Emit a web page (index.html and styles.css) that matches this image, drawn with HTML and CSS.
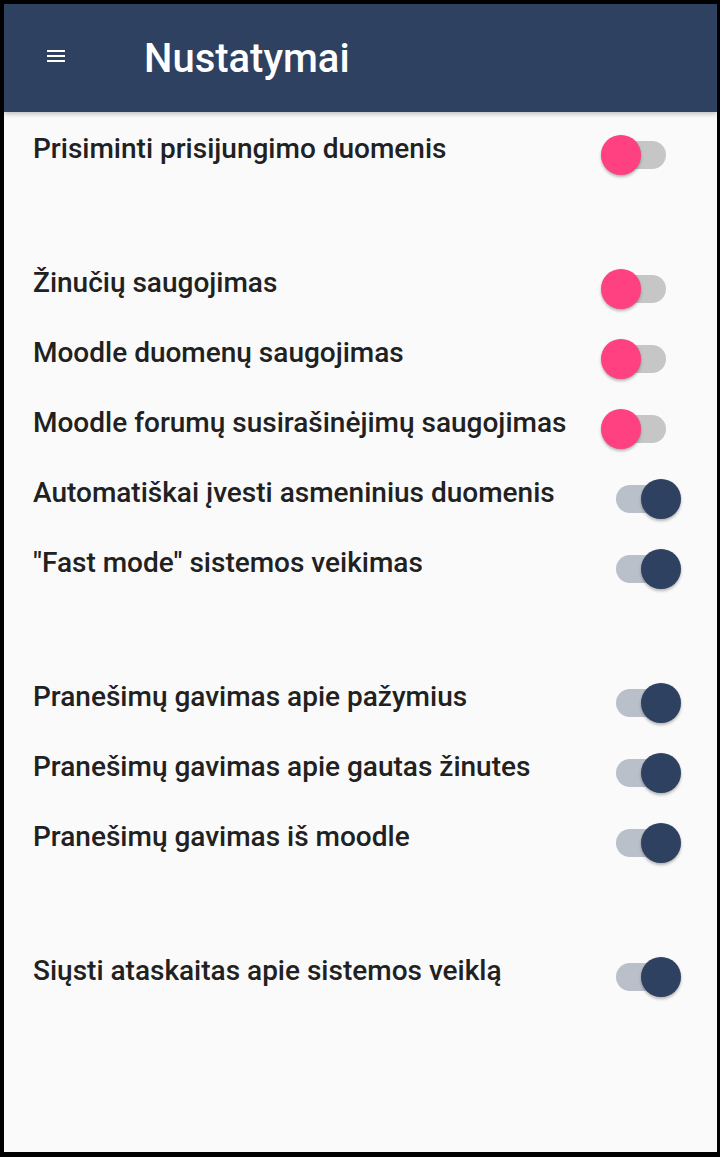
FILE: index.html
```html
<!DOCTYPE html>
<html lang="lt">
<head>
<meta charset="utf-8">
<title>Nustatymai</title>
<link rel="stylesheet" href="styles.css">
</head>
<body>
<div class="frame">
  <header class="appbar">
    <svg class="menu-icon" width="18" height="12" viewBox="0 0 18 12" aria-hidden="true">
      <rect x="0" y="0" width="18" height="2" fill="#fff"/>
      <rect x="0" y="5" width="18" height="2" fill="#fff"/>
      <rect x="0" y="10" width="18" height="2" fill="#fff"/>
    </svg>
    <h1 class="title">Nustatymai</h1>
  </header>
  <main class="settings">
    <section class="group">
      <div class="row"><span class="label">Prisiminti prisijungimo duomenis</span><span class="switch off"><span class="track"></span><span class="thumb"></span></span></div>
    </section>
    <section class="group">
      <div class="row"><span class="label">Žinučių saugojimas</span><span class="switch off"><span class="track"></span><span class="thumb"></span></span></div>
      <div class="row"><span class="label">Moodle duomenų saugojimas</span><span class="switch off"><span class="track"></span><span class="thumb"></span></span></div>
      <div class="row"><span class="label">Moodle forumų susirašinėjimų saugojimas</span><span class="switch off"><span class="track"></span><span class="thumb"></span></span></div>
      <div class="row"><span class="label">Automatiškai įvesti asmeninius duomenis</span><span class="switch on"><span class="track"></span><span class="thumb"></span></span></div>
      <div class="row"><span class="label">"Fast mode" sistemos veikimas</span><span class="switch on"><span class="track"></span><span class="thumb"></span></span></div>
    </section>
    <section class="group">
      <div class="row"><span class="label">Pranešimų gavimas apie pažymius</span><span class="switch on"><span class="track"></span><span class="thumb"></span></span></div>
      <div class="row"><span class="label">Pranešimų gavimas apie gautas žinutes</span><span class="switch on"><span class="track"></span><span class="thumb"></span></span></div>
      <div class="row"><span class="label">Pranešimų gavimas iš moodle</span><span class="switch on"><span class="track"></span><span class="thumb"></span></span></div>
    </section>
    <section class="group">
      <div class="row"><span class="label">Siųsti ataskaitas apie sistemos veiklą</span><span class="switch on"><span class="track"></span><span class="thumb"></span></span></div>
    </section>
  </main>
</div>
</body>
</html>
```
FILE: styles.css
```css
* { box-sizing: border-box; }
html, body { margin: 0; padding: 0; }
body { background: #000; font-family: Roboto, "Noto Sans", "Liberation Sans", sans-serif; }

.frame {
  width: 720px;
  height: 1157px;
  border-style: solid;
  border-color: #000;
  border-width: 4px 3px 5px 4px;
  background: #fafafa;
  overflow: hidden;
}

.appbar {
  position: relative;
  height: 108px;
  background: #2e4160;
  display: flex;
  align-items: center;
  box-shadow: 0 2px 5px rgba(0, 0, 0, 0.25);
  z-index: 1;
}
.menu-icon {
  display: block;
  margin-left: 43px;
  margin-top: -4px;
  flex: none;
}
.title {
  margin: 0 0 0 79px;
  color: #fff;
  font-size: 40px;
  font-weight: 500;
  line-height: normal;
  letter-spacing: 0;
}

.settings {
  padding-top: 2px;
  display: flex;
  flex-direction: column;
  gap: 64px;
}

.row {
  height: 70px;
  display: flex;
  align-items: flex-start;
  justify-content: space-between;
  padding-left: 29px;
  padding-right: 36px;
}
.label {
  font-size: 28px;
  font-weight: 500;
  line-height: 70px;
  color: #212121;
  white-space: nowrap;
}

.switch {
  position: relative;
  flex: none;
  width: 80px;
  height: 40px;
  margin-top: 21px;
}
.track {
  position: absolute;
  left: 15px;
  top: 6px;
  width: 50px;
  height: 28px;
  border-radius: 14px;
}
.thumb {
  position: absolute;
  top: 0;
  width: 40px;
  height: 40px;
  border-radius: 50%;
  box-shadow: 0 2px 3px rgba(0, 0, 0, 0.28), 0 0 1px rgba(0, 0, 0, 0.12);
}
.switch.off .track { background: #c6c6c6; }
.switch.off .thumb { left: 0; background: #ff4081; }
.switch.on .track { background: #b9c0ca; }
.switch.on .thumb { left: 40px; background: #2e4160; }
```
